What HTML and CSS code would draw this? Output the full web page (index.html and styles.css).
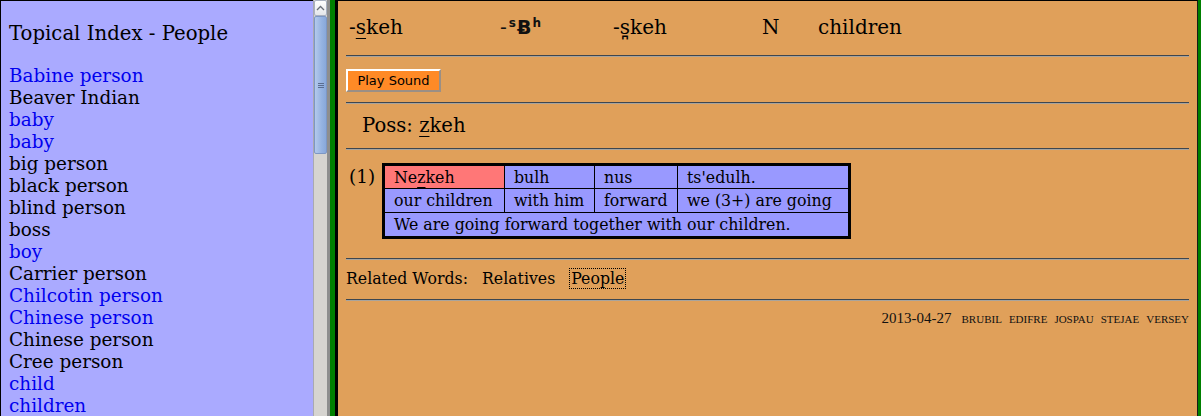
FILE: index.html
```html
<!DOCTYPE html>
<html>
<head>
<meta charset="utf-8">
<title>children</title>
<link rel="stylesheet" href="styles.css">
</head>
<body>
<div class="frames">
  <div class="left">
    <div class="lpane">
      <div class="ltitle">Topical Index - People</div>
      <ul class="topics">
        <li><a class="lnk" href="#">Babine person</a></li>
        <li>Beaver Indian</li>
        <li><a class="lnk" href="#">baby</a></li>
        <li><a class="lnk" href="#">baby</a></li>
        <li>big person</li>
        <li>black person</li>
        <li>blind person</li>
        <li>boss</li>
        <li><a class="lnk" href="#">boy</a></li>
        <li>Carrier person</li>
        <li><a class="lnk" href="#">Chilcotin person</a></li>
        <li><a class="lnk" href="#">Chinese person</a></li>
        <li>Chinese person</li>
        <li>Cree person</li>
        <li><a class="lnk" href="#">child</a></li>
        <li><a class="lnk" href="#">children</a></li>
      </ul>
    </div>
    <div class="scrollbar">
      <div class="sb-btn">
        <svg width="9" height="6" viewBox="0 0 9 6"><path d="M1 5 L4.5 1.5 L8 5" fill="none" stroke="#6a6f78" stroke-width="1.3"/></svg>
      </div>
      <div class="sb-thumb"><span class="grip"></span><span class="grip"></span><span class="grip"></span></div>
      <div class="sb-track"></div>
    </div>
  </div>
  <div class="divider"><span class="d-gray"></span><span class="d-green"></span><span class="d-black"></span></div>
  <div class="right">
    <div class="head">
      <span class="hc c1">-<u class="ul">s</u>keh</span>
      <span class="hc c2 ipa"><span class="dash">-</span><sup class="sup">s</sup>Ƀ<sup class="sup">h</sup></span>
      <span class="hc c3">-s&#x32A;keh</span>
      <span class="hc c4">N</span>
      <span class="hc c5">children</span>
    </div>
    <div class="hr"></div>
    <div class="btnrow"><button class="play" type="button">Play Sound</button></div>
    <div class="hr hr2"></div>
    <div class="poss">Poss: <u class="ul">z</u>keh</div>
    <div class="hr hr2"></div>
    <div class="example">
      <span class="num">(1)</span>
      <div class="gloss">
        <div class="cell hl">Ne<u class="ul">z</u>keh</div>
        <div class="cell">bulh</div>
        <div class="cell">nus</div>
        <div class="cell">ts'edulh.</div>
        <div class="cell">our children</div>
        <div class="cell">with him</div>
        <div class="cell">forward</div>
        <div class="cell">we (3+) are going</div>
        <div class="cell full">We are going forward together with our children.</div>
      </div>
    </div>
    <div class="hr hr4"></div>
    <div class="related">Related Words:<span class="rel">Relatives</span><span class="rel focus">People</span></div>
    <div class="hr hr5"></div>
    <div class="foot">2013-04-27<span class="init first">BRUBIL</span><span class="init">EDIFRE</span><span class="init">JOSPAU</span><span class="init">STEJAE</span><span class="init">VERSEY</span></div>
  </div>
  <div class="rgreen"></div>
</div>
</body>
</html>
```
FILE: styles.css
```css
html, body {
  margin: 0;
  padding: 0;
  overflow: hidden;
}
body {
  font-family: "DejaVu Serif", serif;
  color: #000;
}
.frames {
  display: flex;
  height: 416px;
  width: 1201px;
}
.left {
  display: flex;
  flex: none;
  width: 327px;
}
.lpane {
  width: 313px;
  box-sizing: border-box;
  background: #aaaaff;
  border-top: 1px solid #000;
  border-left: 1px solid #000;
  padding-left: 8px;
  overflow: hidden;
}
.ltitle {
  margin-top: 21px;
  font-size: 19.7px;
  line-height: 24px;
}
.topics {
  list-style: none;
  margin: 19px 0 0;
  padding: 0;
  font-size: 18.4px;
  line-height: 22px;
}
.lnk {
  color: #0000ee;
  text-decoration: none;
}
.scrollbar {
  width: 14px;
  flex: none;
  display: flex;
  flex-direction: column;
  background: #d6d4d0;
  box-sizing: border-box;
  border-left: 1px solid #a9a9b0;
}
.sb-btn {
  height: 16px;
  box-sizing: border-box;
  border: 1px solid #a8b0c0;
  border-radius: 2px;
  background: linear-gradient(#ffffff, #e4e6ea);
  display: flex;
  align-items: center;
  justify-content: center;
}
.sb-thumb {
  height: 138px;
  box-sizing: border-box;
  border: 1px solid #7d97c4;
  border-radius: 2px;
  background: linear-gradient(90deg, #b3c9ec, #95b3e2 60%, #88a8da);
  display: flex;
  flex-direction: column;
  align-items: center;
  justify-content: center;
  gap: 1px;
}
.grip {
  display: block;
  width: 6px;
  height: 1px;
  background: #5b6d90;
}
.sb-track {
  flex: 1;
}
.divider {
  display: flex;
  flex: none;
}
.d-gray {
  width: 3px;
  background: #8e8e8e;
}
.d-green {
  width: 5px;
  background: #008000;
}
.d-black {
  width: 3px;
  background: #000;
}
.right {
  width: 860px;
  flex: none;
  box-sizing: border-box;
  background: #e0a05a;
  border-top: 1px solid #000;
  border-right: 1px solid #1a1a1a;
  padding: 0 8px;
  overflow: hidden;
}
.rgreen {
  width: 3px;
  flex: none;
  background: #008000;
}
.head {
  display: flex;
  margin-top: 14px;
  padding-left: 3px;
  font-size: 20px;
  line-height: 24px;
  white-space: nowrap;
}
.hc { display: block; }
.c1 { width: 151px; }
.c2 { width: 113px; }
.c3 { width: 149px; }
.c4 { width: 56px; }
.ul {
  text-decoration: underline;
  text-underline-offset: 4px;
  text-decoration-thickness: 1px;
}
.ipa {
  font-family: "DejaVu Sans", sans-serif;
  font-size: 19px;
  font-weight: bold;
  color: #111;
}
.dash {
  font-weight: normal;
  margin-right: 1px;
}
.sup {
  font-size: 12px;
  vertical-align: 7px;
  line-height: 0;
  margin: 0 1px;
}
.hr {
  height: 0;
  margin-top: 16px;
  border-top: 1px solid #3d4650;
  border-bottom: 1px solid #a9a49c;
}
.btnrow {
  margin-top: 12px;
  height: 23px;
  display: flex;
}
.play {
  width: 95px;
  height: 23px;
  margin: 0;
  padding: 0;
  box-sizing: border-box;
  background: #ff8a26;
  border: 2px solid;
  border-color: #ffffff #9a8f85 #9a8f85 #ffffff;
  font-family: "DejaVu Sans", sans-serif;
  font-size: 13px;
  color: #000;
}
.hr2 { margin-top: 10px; }
.poss {
  margin-top: 10px;
  padding-left: 16px;
  font-size: 19.6px;
  line-height: 24px;
}
.example {
  display: flex;
  align-items: flex-start;
  margin-top: 13px;
  padding-left: 3px;
}
.num {
  width: 33px;
  font-size: 18.4px;
  line-height: 22px;
  margin-top: 3px;
}
.gloss {
  display: grid;
  grid-template-columns: 119px 89px 82px 170px;
  grid-template-rows: 22px 23px 23px;
  gap: 1px;
  background: #000;
  border: 3px solid #000;
  font-size: 15.8px;
  line-height: 23px;
}
.cell {
  background: #9999ff;
  padding: 0 9px;
  white-space: nowrap;
}
.cell.hl { background: #ff7777; }
.cell.full {
  grid-column: 1 / -1;
}
.hr4 { margin-top: 19px; }
.related {
  margin-top: 9px;
  font-size: 15.75px;
  line-height: 20px;
}
.rel { margin-left: 14px; }
.rel.focus {
  outline: 1px dotted #000;
  outline-offset: 0;
  padding: 0 1px;
  margin-left: 15px;
}
.hr5 { margin-top: 10px; }
.foot {
  margin-top: 8px;
  text-align: right;
  font-family: "Liberation Serif", serif;
  font-size: 15px;
  line-height: 18px;
  color: #111;
}
.init {
  font-size: 11px;
  margin-left: 7px;
}
.init.first { margin-left: 10px; }
```
